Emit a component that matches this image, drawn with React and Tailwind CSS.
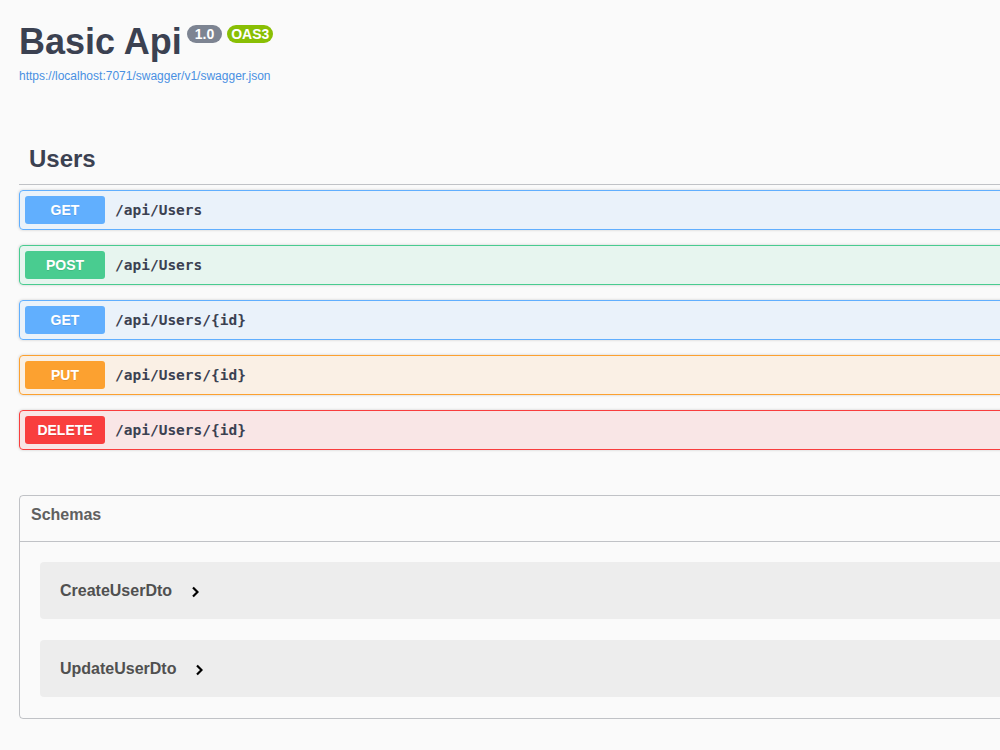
import React from "react";

const ops = [
  { method: "GET", path: "/api/Users", badge: "bg-[#61affe]", row: "bg-[#61affe]/10 border-[#61affe]" },
  { method: "POST", path: "/api/Users", badge: "bg-[#49cc90]", row: "bg-[#49cc90]/10 border-[#49cc90]" },
  { method: "GET", path: "/api/Users/{id}", badge: "bg-[#61affe]", row: "bg-[#61affe]/10 border-[#61affe]" },
  { method: "PUT", path: "/api/Users/{id}", badge: "bg-[#fca130]", row: "bg-[#fca130]/10 border-[#fca130]" },
  { method: "DELETE", path: "/api/Users/{id}", badge: "bg-[#f93e3e]", row: "bg-[#f93e3e]/10 border-[#f93e3e]" },
];

const schemas = ["CreateUserDto", "UpdateUserDto"];

const Chevron = () => (
  <svg width="8" height="12" viewBox="0 0 8 12" className="shrink-0">
    <path d="M2 1.5 L6.5 6 L2 10.5" fill="none" stroke="#000" strokeWidth="2.2" />
  </svg>
);

const OpBlock = ({ op }) => (
  <div className={`flex items-center h-10 mb-[15px] p-[5px] border rounded shadow-[0_0_3px_rgba(0,0,0,0.19)] ${op.row}`}>
    <span
      className={`w-20 h-7 rounded-[3px] flex items-center justify-center text-white text-sm font-bold [text-shadow:0_1px_0_rgba(0,0,0,0.1)] ${op.badge}`}
    >
      {op.method}
    </span>
    <span className="ml-[10px] mt-[1px] text-[14.5px] font-bold text-[#3b4151] font-['DejaVu_Sans_Mono',monospace]">
      {op.path}
    </span>
  </div>
);

export default function App() {
  return (
    <div className="min-h-screen overflow-hidden bg-[#fafafa] font-['Liberation_Sans',Arial,sans-serif] text-[#3b4151]">
      <div className="w-[1460px] pl-[19px]">
        {/* info header */}
        <div className="pt-[21px]">
          <div className="flex items-start">
            <h2 className="text-[36px] leading-[42px] font-bold text-[#3b4151]">Basic Api</h2>
            <span className="ml-[5px] mt-[4px] h-[18px] px-[8px] rounded-full bg-[#7d8492] text-white text-sm font-bold leading-[18px]">
              1.0
            </span>
            <span className="ml-[5px] mt-[4px] h-[18px] px-[4px] rounded-full bg-[#89bf04] text-white text-sm font-bold leading-[18px]">
              OAS3
            </span>
          </div>
          <a className="block mt-[6px] text-xs text-[#4990e2] leading-[14px]">
            https://localhost:7071/swagger/v1/swagger.json
          </a>
        </div>

        {/* Users tag */}
        <div className="mt-[50px]">
          <h3 className="pl-[10px] py-[10px] text-2xl font-bold leading-[31px] border-b border-[#3b4151]/30 mb-[5px]">
            Users
          </h3>
          {ops.map((op, i) => (
            <OpBlock key={i} op={op} />
          ))}
        </div>

        {/* schemas */}
        <section className="mt-[45px] border border-[#3b4151]/30 rounded">
          <h4 className="pl-[11px] pt-[10px] pb-[17px] text-base font-bold leading-[18px] text-[#606060] border-b border-[#3b4151]/30">
            Schemas
          </h4>
          <div className="px-5 pt-5 pb-[21px] flex flex-col gap-[21px]">
            {schemas.map((name) => (
              <div key={name} className="h-[57px] rounded bg-black/5 flex items-center pl-5">
                <span className="text-base font-bold text-[#505050]">{name}</span>
                <span className="ml-[19px] mt-[2px]">
                  <Chevron />
                </span>
              </div>
            ))}
          </div>
        </section>
      </div>
    </div>
  );
}
